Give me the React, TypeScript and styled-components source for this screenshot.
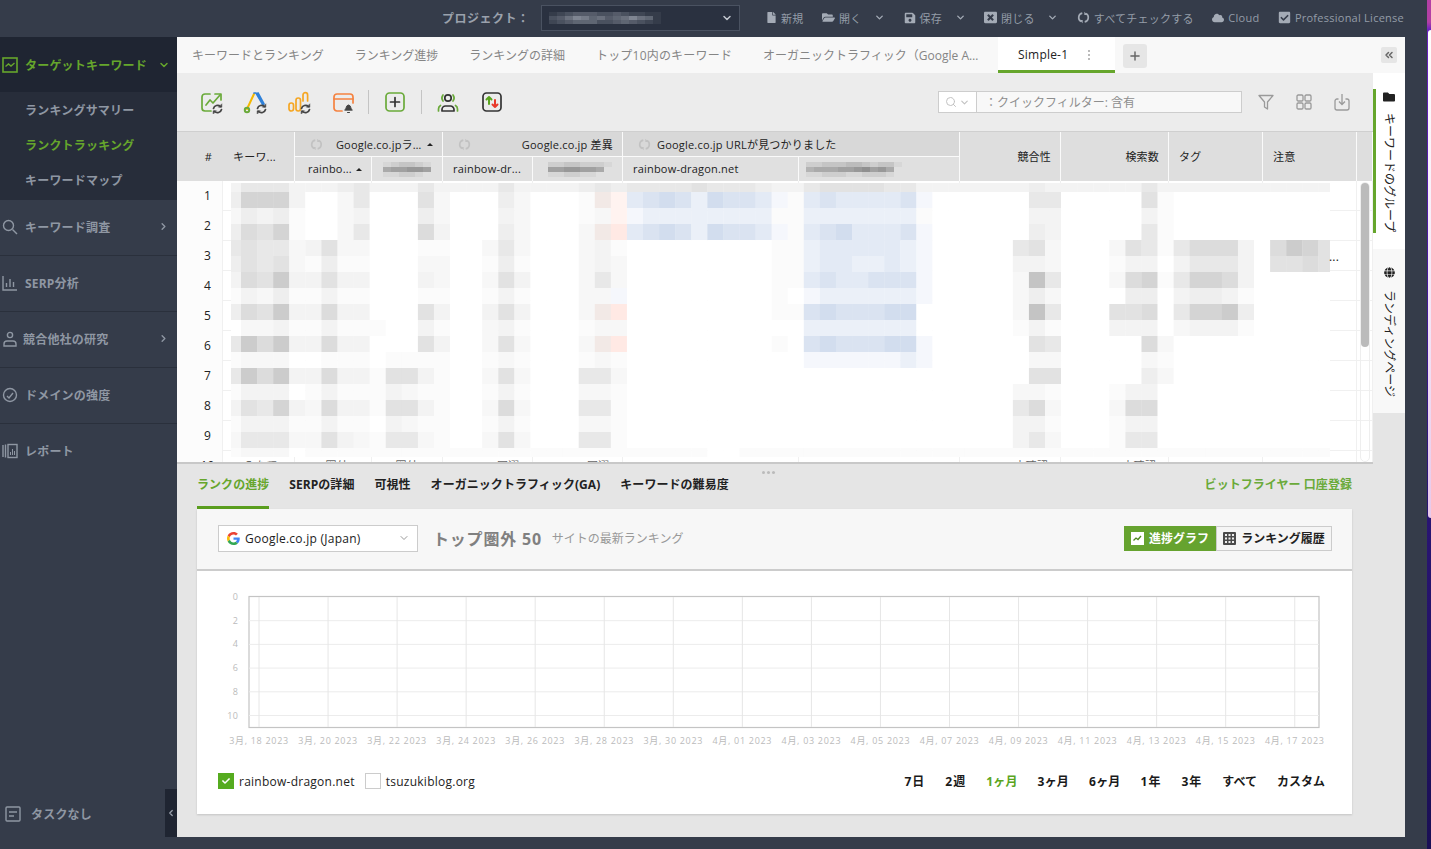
import React from 'react';
import styled, { createGlobalStyle } from 'styled-components';
import { FaFile, FaFolderOpen, FaSave, FaWindowClose, FaCloud, FaCheckSquare, FaFolder, FaGlobe, FaCheck } from 'react-icons/fa';
import { ChevronDown, ChevronRight, ChevronLeft, ChevronsLeft, Plus, Search } from 'lucide-react';

const COLUMNS = '46px 72px 77px 71px 90px 90px 176px 161px 101px 108px 94px 94px 16px';

const Global = createGlobalStyle`
  html, body { margin: 0; padding: 0; background: #353c4a; overflow: hidden; }
  body { font-family: "Open Sans", "Noto Sans CJK JP", sans-serif; font-size: 12px; letter-spacing: .2px; }
  * { box-sizing: border-box; }
`;

const Page = styled.div`
  position: relative; width: 1431px; height: 849px; display: flex; flex-direction: column; background: #353c4a; overflow: hidden;
`;
const TopBar = styled.header`
  height: 37px; flex: none; display: flex; align-items: center; padding: 0 27px 2px 442px; color: #949ca8; font-size: 11px;
`;
const ProjectLabel = styled.span`
  width: 99px; font-size: 12px; font-weight: 700; color: #9aa1ac; letter-spacing: .5px;
`;
const ProjectSelect = styled.div`
  width: 199px; height: 26px; background: #2a3140; border: 1px solid #4a5261; display: flex; align-items: center; justify-content: space-between; padding: 0 6px 0 7px; color: #c2c7cf;
`;
const TopActions = styled.nav`
  margin-left: auto; display: flex; align-items: center; gap: 18.5px;
`;
const TopAction = styled.span`
  display: inline-flex; align-items: center; gap: 4px; white-space: nowrap; color: #949ca8; letter-spacing: .25px;
  svg { flex: none; color: #a4abb6; }
`;
const TopCaret = styled.span`
  display: inline-flex; margin-left: 8.5px; color: ${p => p.$dim ? '#6c7482' : '#a4abb6'};
`;
const Strip = styled.div`
  position: absolute; top: 0; right: 0; width: 4px; height: 849px;
  background: linear-gradient(180deg, #b33fa5 0 22px, #6a22c0 30px, #4a1ba0 250px, #2a1575 500px, #1a0f55 849px);
`;
const StripGlow = styled.div`
  position: absolute; top: 30px; right: 0; width: 3px; height: 488px; border-radius: 3px 0 0 3px;
  background: linear-gradient(180deg, #ffffff, #f3e4f6 60%, #e8c8ea);
`;
const Body = styled.div`
  flex: 1; display: flex; min-height: 0;
`;
const Sidebar = styled.aside`
  position: relative; width: 177px; flex: none; display: flex; flex-direction: column; color: #8f97a3; font-weight: 700;
`;
const NavHead = styled.div`
  height: 55px; display: flex; align-items: center; background: #1f2532; color: #66a62c; padding-left: 2px;
`;
const SubNav = styled.div`
  height: 108px; background: #272d3a; padding-top: 1px;
`;
const SubItem = styled.div`
  height: 35px; line-height: 35px; padding-left: 25px; color: ${p => p.$active ? '#66a62c' : '#8f97a3'};
`;
const NavItem = styled.div`
  height: 56px; display: flex; align-items: center; padding: 0 0 2px 2px; border-bottom: 1px solid ${p => p.$last ? 'transparent' : '#2a303c'};
`;
const NavIcon = styled.svg`
  width: 16px; height: 16px; flex: none; fill: none; stroke: currentColor; stroke-width: 1.4; color: ${p => p.$on ? '#66a62c' : '#8f97a3'};
`;
const NavText = styled.span`
  margin-left: ${p => p.$tight ? '5px' : '7px'}; flex: 1; white-space: nowrap;
`;
const NavChevron = styled.span`
  display: inline-flex; width: 19px; color: ${p => p.$on ? '#66a62c' : '#8f97a3'};
`;
const SideFoot = styled.div`
  margin-top: auto; display: flex; align-items: center; padding: 0 0 26px 5px; gap: 10px;
`;
const Collapse = styled.div`
  position: absolute; right: 0; bottom: 12px; width: 12px; height: 48px; background: #1f2532; color: #9aa1ac; display: flex; align-items: center; justify-content: center;
`;
const Main = styled.main`
  width: 1228px; height: 800px; flex: none; display: flex; flex-direction: column; background: #e5e5e5;
`;
const TabBar = styled.div`
  height: 36px; flex: none; display: flex; background: #f8f8f8; position: relative;
`;
const Tab = styled.div`
  padding: 0 16px 0 15px; height: 36px; line-height: 38px; color: #858585; white-space: nowrap; letter-spacing: ${p => p.$wide ? '.2px' : '0'}; flex: none;
  ${p => p.$fixed ? 'width: 250px; overflow: hidden; text-overflow: ellipsis;' : ''}
`;
const ActiveTab = styled.div`
  width: 117px; height: 36px; background: #fff; border-bottom: 3px solid #66a62c; display: flex; align-items: center; padding: 2px 0 0 20px; color: #222; position: relative; flex: none;
`;
const TabDots = styled.span`
  position: absolute; left: 90px; top: 13px; width: 2px; height: 2px; background: #bbb; box-shadow: 0 4px 0 #bbb, 0 8px 0 #bbb;
`;
const AddTab = styled.div`
  width: 24px; height: 24px; margin: 7px 0 0 8px; background: #e6e6e6; border-radius: 3px; color: #666; display: flex; align-items: center; justify-content: center;
`;
const RailToggle = styled.div`
  position: absolute; left: 1204px; top: 10px; width: 16px; height: 16px; background: #e6e6e6; border-radius: 2px; color: #666; display: flex; align-items: center; justify-content: center;
`;
const Upper = styled.div`
  height: 391px; flex: none; display: flex;
`;
const GridArea = styled.section`
  width: 1196px; flex: none; display: flex; flex-direction: column;
`;
const Toolbar = styled.div`
  height: 59px; flex: none; background: #ececec; border-bottom: 1px solid #cfcfcf; display: flex; align-items: center; padding: 0 22px 0 22px;
`;
const ToolGroup = styled.div`
  display: flex; align-items: center; gap: 20px;
`;
const ToolIcon = styled.svg`
  width: 24px; height: 24px; flex: none; fill: none; stroke-width: 1.7; stroke-linecap: round; stroke-linejoin: round;
`;
const ToolDivider = styled.span`
  width: 1px; height: 24px; background: #c4c4c4; margin: 0 14px 0 ${p => p.$m}px;
`;
const QuickFilter = styled.div`
  margin-left: auto; width: 304px; height: 22px; display: flex; border: 1px solid #cdcdcd; background: #f8f8f8;
`;
const FilterPick = styled.div`
  width: 38px; flex: none; background: #fff; border-right: 1px solid #cdcdcd; display: flex; align-items: center; padding-left: 6px; gap: 2px; color: #c2c2c2;
`;
const FilterText = styled.div`
  padding-left: 8px; line-height: 21px; color: #8e8e8e; letter-spacing: 0;
`;
const RightTools = styled.div`
  display: flex; gap: 20px; margin-left: 15px; color: #9a9a9a;
`;
const HeadGrid = styled.div`
  height: 49px; flex: none; display: grid; background: #dedede;
  grid-template-columns: ${COLUMNS};
  grid-template-rows: 25px 24px; color: #222; font-size: 11px; line-height: 16px;
`;
const HeadCell = styled.div`
  grid-column: ${p => p.$col}; grid-row: ${p => p.$row || '1 / span 2'}; display: flex; align-items: center; min-width: 0; white-space: nowrap;
  justify-content: ${p => p.$align || 'flex-start'}; padding: ${p => p.$pad || '0 10px'};
  background: ${p => p.$bg || '#dedede'}; border-right: 1px solid ${p => p.$plain ? 'transparent' : '#fafafa'};
  ${p => p.$under ? 'border-bottom: 1px solid #fafafa;' : ''}
`;
const HeadClip = styled.span`
  overflow: hidden; text-overflow: ellipsis;
`;
const RankHeadClip = styled(HeadClip)`
  width: 88px; margin-left: 13px;
`;
const UrlHeadText = styled.span`
  margin-left: 6px;
`;
const SortUp = styled.span`
  width: 0; height: 0; flex: none; border: 3px solid transparent; border-bottom: 3px solid #222; border-top: 0; margin-left: 4px;
`;
const RowsArea = styled.div`
  position: relative; height: 283px; flex: none; background: #fff; overflow: hidden; border-bottom: 2px solid #c8c8c8;
`;
const Row = styled.div`
  height: 30px; display: grid; border-bottom: 1px solid #f0f0f0; line-height: 30px;
  grid-template-columns: ${COLUMNS}; color: #666; font-size: 11px;
`;
const RowNum = styled.div`
  text-align: center; background: #fcfcfc; border-right: 1px solid #f0f0f0; color: #222; font-size: 12px; padding-left: 16px;
`;
const RowCell = styled.div`
  border-right: 1px solid #f0f0f0; overflow: hidden; white-space: nowrap; text-align: ${p => p.$a || 'right'}; padding: 0 ${p => p.$r ?? 7}px 0 ${p => p.$l ?? 2}px;
`;
const Mosaic = styled.svg`
  position: absolute; left: 54px; top: 2px;
`;
const More = styled.span`
  position: absolute; left: 1152px; top: 70px; line-height: 12px; color: #222; font-size: 12px;
`;
const ScrollTrack = styled.div`
  position: absolute; left: 1183px; top: 1px; width: 10px; height: 280px; border: 1px solid #eee; border-radius: 5px;
`;
const ScrollThumb = styled.div`
  width: 8px; height: 164px; background: #bbb; border-radius: 4px;
`;
const Rail = styled.aside`
  width: 32px; flex: none; display: flex; flex-direction: column; color: #222;
`;
const RailTab = styled.div`
  height: ${p => p.$h}px; background: ${p => p.$on ? '#fff' : '#f8f8f8'}; display: flex; flex-direction: column; align-items: center; padding-top: 18px; position: relative;
  ${p => p.$on ? `&::before { content: ""; position: absolute; left: 0; top: 16px; width: 3px; height: 144px; background: #66a62c; }` : ''}
`;
const RailLabel = styled.span`
  writing-mode: vertical-rl; text-orientation: sideways; margin-top: ${p => p.$m}px; line-height: 14px; white-space: nowrap; letter-spacing: 0; color: #222;
`;
const Lower = styled.section`
  position: relative; flex: 1; display: flex; flex-direction: column; padding: 0 53px 23px 20px; min-height: 0;
`;
const Grip = styled.span`
  position: absolute; left: 585px; top: 7px; width: 3px; height: 3px; border-radius: 50%; background: #bbb; box-shadow: 5px 0 0 #bbb, 10px 0 0 #bbb;
`;
const LowerTabs = styled.div`
  height: 45px; flex: none; display: flex; gap: 20px; font-weight: 700; color: #222;
`;
const LowerTab = styled.div`
  height: 45px; padding-top: 14px; line-height: 14px; white-space: nowrap; letter-spacing: .05px;
  color: ${p => p.$on ? '#66a62c' : '#222'}; border-bottom: 3px solid ${p => p.$on ? '#5a9e1e' : 'transparent'};
`;
const PromoLink = styled.div`
  margin-left: auto; padding-top: 14px; line-height: 14px; color: #6aaa3a; white-space: nowrap; letter-spacing: .05px;
`;
const Card = styled.div`
  flex: 1; background: #fff; box-shadow: 0 1px 2px rgba(0,0,0,.15); display: flex; flex-direction: column; min-height: 0;
`;
const CardHead = styled.div`
  height: 62px; flex: none; background: #f7f7f7; border-bottom: 2px solid #ccc; display: flex; align-items: center; padding: 0 20px 2px 21px;
`;
const EngineSelect = styled.div`
  width: 200px; height: 27px; border: 1px solid #ccc; background: #fff; display: flex; align-items: center; padding: 0 7px 0 8px; gap: 5px; color: #222; letter-spacing: .25px;
`;
const EngineName = styled.span`
  flex: 1; white-space: nowrap;
`;
const Title = styled.span`
  margin-left: 15px; font-size: 16px; font-weight: 700; color: #808080; letter-spacing: .8px; white-space: nowrap;
`;
const SubTitle = styled.span`
  margin-left: 10px; color: #999; white-space: nowrap; letter-spacing: 0;
`;
const ViewSwitch = styled.div`
  margin-left: auto; display: flex; height: 25px; font-weight: 700;
`;
const ViewButton = styled.div`
  width: ${p => p.$w}px; display: flex; align-items: center; justify-content: center; gap: 5px; white-space: nowrap; letter-spacing: 0;
  background: ${p => p.$on ? '#66a32f' : '#f5f5f5'}; color: ${p => p.$on ? '#fff' : '#222'}; border: 1px solid ${p => p.$on ? '#66a32f' : '#ccc'};
`;
const Chart = styled.svg`
  flex: none; display: block; font-family: "Open Sans", "Noto Sans CJK JP", sans-serif;
`;
const CardFoot = styled.div`
  flex: 1; display: flex; align-items: center; padding: 0 27px 6px 21px; color: #222;
`;
const CheckBox = styled.span`
  width: 16px; height: 16px; flex: none; display: inline-flex; align-items: center; justify-content: center; color: #fff;
  background: ${p => p.$on ? '#55ab1f' : '#fff'}; border: 1px solid ${p => p.$on ? '#55ab1f' : '#ccc'};
`;
const LegendName = styled.span`
  margin: 0 10px 0 5px; white-space: nowrap; letter-spacing: .25px;
`;
const Ranges = styled.div`
  margin-left: auto; display: flex; gap: 20px; font-weight: 700;
`;
const RangeItem = styled.span`
  color: ${p => p.$on ? '#5aa51e' : '#1a1a1a'}; white-space: nowrap; letter-spacing: ${p => p.$ls ?? .2}px;
`;

const Sync = ({ size = 14, color = '#a4abb6' }: { size?: number; color?: string }) => (
  <svg width={size} height={size} viewBox="0 0 16 16" fill="none" stroke={color} strokeWidth="2">
    <path d="M6.5 2.6A5.6 5.6 0 0 0 5 13" />
    <path d="M9.5 13.4A5.6 5.6 0 0 0 11 3" />
    <path d="M3 11h4v4z M13 5H9V1z" fill={color} stroke="none" />
  </svg>
);

const mix = (a: string, b: string, t: number) => {
  const n = (s: string, i: number) => parseInt(s.slice(1 + i * 2, 3 + i * 2), 16);
  const ch = [0, 1, 2].map(i => Math.round(n(a, i) + (n(b, i) - n(a, i)) * t));
  return `rgb(${ch.join(',')})`;
};

const Smudge = ({ rows, w, h, base, ink }: { rows: string[]; w: number; h: number; base: string; ink: string }) => (
  <svg width={rows[0].length * w} height={rows.length * h}>
    {rows.map((r, y) => r.split('').map((c, x) => (
      <rect key={`${x}-${y}`} x={x * w} y={y * h} width={w + .5} height={h + .5} fill={mix(base, ink, Number(c) / 9)} />
    )))}
  </svg>
);

const PALETTE: Record<string, string> = {
  '0': '#ffffff', '1': '#fbfbfb', '2': '#f7f7f7', '3': '#f3f3f3', '4': '#eeeeee', '5': '#e8e8e8', '6': '#e2e2e2', '7': '#dcdcdc', '8': '#d4d4d4', '9': '#cccccc', a: '#c4c4c4',
  p: '#f5f7fc', q: '#ebf0f8', r: '#e3eaf5', s: '#dae3f1', t: '#d2ddee', x: '#fff3f0', y: '#ffe9e4', z: '#f2e9e6',
};
const BANDS = [
  '3555|33345|33353|33353|333454|555565554|33|5666655|333333|343|3333|353|33333|3|3333',
  '4888|30025|00062|00042|0001zx|rstsqtssr|p1|rsrrrrs|p00000|055|0000|061|00000|0|0000',
  '2434|10023|00042|00032|00012x|pqqqqqqqq|11|qqqqqqq|100000|033|0000|031|00000|0|0000',
  '4768|10025|00073|00042|0002zy|rstsqtssr|p1|rstrrrs|p00000|043|0000|051|00000|0|0000',
  '5655|23622|00011|00252|000231|000000000|11|qrrrrrq|p00000|562|0002|651|57773|0|7986',
  '4656|21411|00022|00141|000232|000000000|11|qrrqqrq|p00000|332|0001|330|35553|0|6676',
  '3769|33633|00032|00263|000252|000000000|11|rsrrsss|p00000|2a5|0002|781|58873|0|0000',
  '1324|11311|00011|00131|00022p|000000000|10|pqqqqqq|p00000|242|0000|440|34431|0|0000',
  '4769|33733|00063|00363|0002zy|000000000|11|stssstt|000000|2a5|0006|670|58894|0|0000',
  '0223|11311|10031|00231|000122|000000000|00|qqqqqqq|000000|131|0003|330|23331|0|0000',
  '5979|33733|00063|00262|0002zy|000000000|10|stssstt|p00000|065|0000|072|00000|0|0000',
  '1222|00111|01111|00121|000121|000000000|00|ppppppq|p00000|022|0000|021|00000|0|0000',
  '5979|33733|16631|00262|000552|000000000|00|0000000|000000|066|0000|042|00000|0|0000',
  '1333|01311|13211|00131|000221|000000000|00|0000000|000000|221|0001|330|00000|0|0000',
  '3658|32733|16631|00272|000551|000000000|00|0000000|000000|572|0002|770|00000|0|0000',
  '1333|11311|03211|00131|000221|000000000|00|0000000|000000|331|0001|330|00000|0|0000',
  '2555|22632|15521|00262|000551|000000000|00|0000000|000000|352|0001|550|00000|0|0000',
  '1222|01111|11111|11111|111111|111110011|11|1111111|111111|111|1111|111|11111|1|1111',
].map(s => s.replace(/\|/g, ''));

const CW = 16.08;
const BlurMosaic = () => {
  const rects: React.ReactNode[] = [];
  let y = 0;
  BANDS.forEach((b, bi) => {
    const h = bi === 0 || bi === 17 ? 9 : 16;
    b.split('').forEach((c, i) => {
      const x0 = Math.max(0, 10 + (i - 1) * CW);
      const x1 = Math.min(1099, 10 + i * CW);
      rects.push(<rect key={`${bi}-${i}`} x={x0} y={y} width={x1 - x0 + .3} height={h} fill={PALETTE[c]} />);
    });
    y += h;
  });
  return <Mosaic width="1099" height="274">{rects}</Mosaic>;
};

const GoogleG = () => (
  <svg width="13" height="13" viewBox="0 0 48 48">
    <path fill="#EA4335" d="M24 9.5c3.5 0 6.7 1.2 9.2 3.600l6.900-6.900C35.900 2.400 30.500 0 24 0 14.600 0 6.500 5.400 2.600 13.200l8 6.200C12.500 13.700 17.800 9.500 24 9.500z" />
    <path fill="#4285F4" d="M47 24.500c0-1.600-.1-3.100-.4-4.500H24v9h12.900c-.6 3-2.200 5.500-4.700 7.200l7.700 6c4.500-4.200 7.100-10.300 7.100-17.700z" />
    <path fill="#FBBC05" d="M10.500 28.600c-.5-1.400-.8-3-.8-4.600s.3-3.200.8-4.600l-8-6.200C1 16.400 0 20.100 0 24s1 7.600 2.600 10.800l7.900-6.200z" />
    <path fill="#34A853" d="M24 48c6.500 0 11.900-2.100 15.900-5.800l-7.700-6c-2.200 1.400-4.900 2.300-8.200 2.300-6.200 0-11.500-4.200-13.400-9.900l-8 6.200C6.500 42.600 14.600 48 24 48z" />
  </svg>
);

const BadgeSync = () => (
  <g stroke="#444" strokeWidth="1.7" fill="none">
    <path d="M14.500 18.500a4.200 4.200 0 0 1 7-2" />
    <path d="M22.500 19.500a4.200 4.200 0 0 1-7 2" />
    <path d="M22.800 14.200v3h-3z M14.200 23.800v-3h3z" fill="#444" strokeWidth=".6" />
  </g>
);

const xLabels = ['3月, 18 2023','3月, 20 2023','3月, 22 2023','3月, 24 2023','3月, 26 2023','3月, 28 2023','3月, 30 2023','4月, 01 2023','4月, 03 2023','4月, 05 2023','4月, 07 2023','4月, 09 2023','4月, 11 2023','4月, 13 2023','4月, 15 2023','4月, 17 2023'];
const yLabels = [0, 2, 4, 6, 8, 10];

const RankChart = () => (
  <Chart width="1155" height="183">
    <rect x="52" y="25.500" width="1070" height="131" fill="#fff" stroke="#c4c4c4" strokeWidth="1.200" />
    {yLabels.map((v, i) => {
      const y = 26 + i * 23.7;
      return (
        <g key={v}>
          {i > 0 && <line x1="52" x2="1122" y1={y} y2={y} stroke="#ececec" />}
          <text x="41" y={y + 3} textAnchor="end" fontSize="9" fill="#bbb">{v}</text>
        </g>
      );
    })}
    {xLabels.map((t, i) => {
      const x = 62 + i * 69.05;
      return (
        <g key={t}>
          <line x1={x} x2={x} y1="26" y2="156" stroke="#e6e6e6" />
          <text x={x} y="173" textAnchor="middle" fontSize="9" letterSpacing=".7" fill="#bbb">{t}</text>
        </g>
      );
    })}
  </Chart>
);

const hdr = '#d8d8d8';
const sub = '#e0e0e0';

export default function App() {
  return (
    <Page>
      <Global />
      <Strip><StripGlow /></Strip>
      <TopBar>
        <ProjectLabel>プロジェクト：</ProjectLabel>
        <ProjectSelect>
          <Smudge w={8} h={4} base="#2a3140" ink="#8a909c" rows={['123444334322110', '346875645686510', '234555334543210']} />
          <ChevronDown size={12} strokeWidth={3} />
        </ProjectSelect>
        <TopActions>
          <TopAction><FaFile size={11} />新規</TopAction>
          <TopAction><FaFolderOpen size={13} />開く<TopCaret $dim><ChevronDown size={11} strokeWidth={3} /></TopCaret></TopAction>
          <TopAction><FaSave size={12} />保存<TopCaret><ChevronDown size={11} strokeWidth={3} /></TopCaret></TopAction>
          <TopAction><FaWindowClose size={13} />閉じる<TopCaret><ChevronDown size={11} strokeWidth={3} /></TopCaret></TopAction>
          <TopAction><Sync size={13} />すべてチェックする</TopAction>
          <TopAction><FaCloud size={12} />Cloud</TopAction>
          <TopAction><FaCheckSquare size={13} />Professional License</TopAction>
        </TopActions>
      </TopBar>
      <Body>
        <Sidebar>
          <NavHead>
            <NavIcon viewBox="0 0 16 16" $on><rect x="1" y="1" width="14" height="14" strokeWidth="1.600" /><path d="M3.500 9.500l3-2.500 2.500 2 3.500-3" /></NavIcon>
            <NavText>ターゲットキーワード</NavText>
            <NavChevron $on><ChevronDown size={12} strokeWidth={3} /></NavChevron>
          </NavHead>
          <SubNav>
            <SubItem>ランキングサマリー</SubItem>
            <SubItem $active>ランクトラッキング</SubItem>
            <SubItem>キーワードマップ</SubItem>
          </SubNav>
          <NavItem>
            <NavIcon viewBox="0 0 16 16"><circle cx="6.500" cy="6.500" r="5" /><path d="M10.500 10.500L15 15" /></NavIcon>
            <NavText>キーワード調査</NavText>
            <NavChevron><ChevronRight size={11} strokeWidth={3} /></NavChevron>
          </NavItem>
          <NavItem>
            <NavIcon viewBox="0 0 16 16"><path d="M1 1v14h14M4.500 12V8M8 12V4M11.500 12V7" /></NavIcon>
            <NavText>SERP分析</NavText>
          </NavItem>
          <NavItem>
            <NavIcon viewBox="0 0 16 16" strokeWidth="1.800"><circle cx="8" cy="4" r="2.600" /><path d="M2 15v-2a3 3 0 0 1 3-3h6a3 3 0 0 1 3 3v2z" /></NavIcon>
            <NavText $tight>競合他社の研究</NavText>
            <NavChevron><ChevronRight size={11} strokeWidth={3} /></NavChevron>
          </NavItem>
          <NavItem>
            <NavIcon viewBox="0 0 16 16"><circle cx="8" cy="8" r="6.500" /><path d="M5 9l2 2 4-5" /></NavIcon>
            <NavText>ドメインの強度</NavText>
          </NavItem>
          <NavItem $last>
            <NavIcon viewBox="0 0 16 16"><path d="M1 2v12M3.500 1.500v13" /><rect x="6" y="1.500" width="9" height="13" /><path d="M8.500 12V9M10.500 12V6M12.500 12V8" strokeWidth="1" /></NavIcon>
            <NavText>レポート</NavText>
          </NavItem>
          <SideFoot>
            <NavIcon viewBox="0 0 16 16" strokeWidth="1.500"><rect x="1" y="1" width="14" height="14" rx="1" /><path d="M4 6h8M4 10h5" /></NavIcon>
            タスクなし
          </SideFoot>
          <Collapse><ChevronLeft size={10} strokeWidth={3} /></Collapse>
        </Sidebar>
        <Main>
          <TabBar>
            <Tab>キーワードとランキング</Tab>
            <Tab>ランキング進捗</Tab>
            <Tab>ランキングの詳細</Tab>
            <Tab $wide>トップ10内のキーワード</Tab>
            <Tab $fixed>オーガニックトラフィック（Google Analytics）</Tab>
            <ActiveTab>Simple-1<TabDots /></ActiveTab>
            <AddTab><Plus size={14} strokeWidth={2.5} /></AddTab>
            <RailToggle><ChevronsLeft size={12} strokeWidth={3} /></RailToggle>
          </TabBar>
          <Upper>
            <GridArea>
              <Toolbar>
                <ToolGroup>
                  <ToolIcon viewBox="0 0 24 24" stroke="#6aaa3a">
                    <path d="M11 4H6a3 3 0 0 0-3 3v11a3 3 0 0 0 3 3h6" /><path d="M7 15l4-5 3 3 7-8" /><path d="M16 4h6v6" /><BadgeSync />
                  </ToolIcon>
                  <ToolIcon viewBox="0 0 24 24">
                    <path d="M4 19L11 4" stroke="#f5b800" strokeWidth="2" /><path d="M11 3h2l7 12M15 3l6 11" stroke="#2f80d8" /><circle cx="4" cy="20" r="2.200" stroke="#6aaa3a" strokeWidth="2" /><BadgeSync />
                  </ToolIcon>
                  <ToolIcon viewBox="0 0 24 24" stroke="#f5a623">
                    <rect x="2" y="13" width="4.500" height="8" rx="2.200" /><rect x="9" y="8" width="4.500" height="13" rx="2.200" /><path d="M16 11V5a2.300 2.300 0 0 1 4.600 0v6" /><BadgeSync />
                  </ToolIcon>
                  <ToolIcon viewBox="0 0 24 24" stroke="#f58240">
                    <path d="M11 21H6a3 3 0 0 1-3-3V7a3 3 0 0 1 3-3h13a3 3 0 0 1 3 3v6" /><path d="M3 9h19" />
                    <path d="M14 20c1.500-1 1-5 3.500-5s2 4 3.500 5z M16.500 22.500h2" fill="#444" stroke="#444" strokeWidth="1" />
                  </ToolIcon>
                </ToolGroup>
                <ToolDivider $m={13} />
                <ToolIcon viewBox="0 0 24 24">
                  <rect x="3" y="3" width="18" height="18" rx="3.500" stroke="#6aaa3a" /><path d="M12 7.500v9M7.500 12h9" stroke="#333" />
                </ToolIcon>
                <ToolDivider $m={14} />
                <ToolGroup>
                  <ToolIcon viewBox="0 0 24 24">
                    <circle cx="12" cy="8" r="3.200" stroke="#333" /><path d="M6 21v-1.500a3.500 3.500 0 0 1 3.500-3.500h5a3.500 3.500 0 0 1 3.500 3.500V21z" stroke="#333" />
                    <path d="M7 5a5 5 0 0 0 0 6M17 5a5 5 0 0 1 0 6M2.500 21v-2a4 4 0 0 1 2-3.500M21.500 21v-2a4 4 0 0 0-2-3.500" stroke="#6aaa3a" />
                  </ToolIcon>
                  <ToolIcon viewBox="0 0 24 24">
                    <rect x="3" y="3" width="18" height="18" rx="3.500" stroke="#333" />
                    <path d="M9 14V7M6.500 9.500L9 7l2.500 2.500" stroke="#5aa51e" strokeWidth="2" /><path d="M15 10v7M12.500 14.500L15 17l2.500-2.500" stroke="#e8392b" strokeWidth="2" />
                  </ToolIcon>
                </ToolGroup>
                <QuickFilter>
                  <FilterPick><Search size={12} /><ChevronDown size={11} strokeWidth={2.5} /></FilterPick>
                  <FilterText>：クイックフィルター: 含有</FilterText>
                </QuickFilter>
                <RightTools>
                  <svg width="18" height="18" viewBox="0 0 18 18" fill="none" stroke="currentColor" strokeWidth="1.300"><path d="M2 2.500h14l-5.500 6.500v7l-3-2V9z" strokeLinejoin="round" /></svg>
                  <svg width="18" height="18" viewBox="0 0 18 18" fill="none" stroke="currentColor" strokeWidth="1.300"><rect x="2" y="2" width="6" height="6" rx="1.200" /><rect x="10" y="2" width="6" height="6" rx="1.200" /><rect x="2" y="10" width="6" height="6" rx="1.200" /><rect x="10" y="10" width="6" height="6" rx="1.200" /></svg>
                  <svg width="18" height="18" viewBox="0 0 18 18" fill="none" stroke="currentColor" strokeWidth="1.300"><path d="M5.500 6H4a2 2 0 0 0-2 2v7a2 2 0 0 0 2 2h10a2 2 0 0 0 2-2V8a2 2 0 0 0-2-2h-1.500" /><path d="M9 1v10M6 8.500L9 11.500l3-3" /></svg>
                </RightTools>
              </Toolbar>
              <HeadGrid>
                <HeadCell $col="1" $align="center" $pad="0 0 0 18px" $plain>#</HeadCell>
                <HeadCell $col="2"><HeadClip>キーワ...</HeadClip></HeadCell>
                <HeadCell $col="3 / span 2" $row="1" $bg={hdr} $under $pad="1px 9px 0 15px" $align="space-between">
                  <Sync size={13} color="#c2c2c2" /><RankHeadClip>Google.co.jpランキング</RankHeadClip><SortUp />
                </HeadCell>
                <HeadCell $col="5 / span 2" $row="1" $bg={hdr} $under $pad="1px 9px 0 15px" $align="space-between">
                  <Sync size={13} color="#c2c2c2" /><span>Google.co.jp 差異</span>
                </HeadCell>
                <HeadCell $col="7 / span 2" $row="1" $bg={hdr} $under $pad="1px 0 0 15px">
                  <Sync size={13} color="#c2c2c2" /><UrlHeadText>Google.co.jp URLが見つかりました</UrlHeadText>
                </HeadCell>
                <HeadCell $col="3" $row="2" $bg={sub} $pad="0 9px 0 13px"><HeadClip>rainbo...</HeadClip><SortUp /></HeadCell>
                <HeadCell $col="4" $row="2" $bg={sub} $align="center" $pad="0">
                  <Smudge w={8} h={5} base="#e0e0e0" ink="#8f8f8f" rows={['123321', '677887', '112210']} />
                </HeadCell>
                <HeadCell $col="5" $row="2" $bg={sub}><HeadClip>rainbow-dr...</HeadClip></HeadCell>
                <HeadCell $col="6" $row="2" $bg={sub} $align="center" $pad="0 0 0 4px">
                  <Smudge w={8} h={5} base="#e0e0e0" ink="#8f8f8f" rows={['22332221', '77887760', '11221100']} />
                </HeadCell>
                <HeadCell $col="7" $row="2" $bg={sub}>rainbow-dragon.net</HeadCell>
                <HeadCell $col="8" $row="2" $bg={sub} $pad="0 0 0 7px">
                  <Smudge w={8} h={5} base="#e0e0e0" ink="#8f8f8f" rows={['223334432331', '566677897860', '112221122210']} />
                </HeadCell>
                <HeadCell $col="9" $align="flex-end" $pad="0 9px 0 0">競合性</HeadCell>
                <HeadCell $col="10" $align="flex-end" $pad="0 9px 0 0">検索数</HeadCell>
                <HeadCell $col="11">タグ</HeadCell>
                <HeadCell $col="12">注意</HeadCell>
                <HeadCell $col="13" $pad="0" />
              </HeadGrid>
              <RowsArea>
                {[1, 2, 3, 4, 5, 6, 7, 8, 9, 10].map(n => (
                  <Row key={n}>
                    <RowNum>{n}</RowNum>
                    <RowCell $a="left" $l={10} $r={0}>{n === 10 ? 'つみたて' : ''}</RowCell>
                    <RowCell>{n === 10 ? '圏外 50' : ''}</RowCell>
                    <RowCell $r={8}>{n === 10 ? '圏外 50' : ''}</RowCell>
                    <RowCell $r={3}>{n === 10 ? '同選 ×' : ''}</RowCell>
                    <RowCell $r={3}>{n === 10 ? '同選 ×' : ''}</RowCell>
                    <RowCell />
                    <RowCell />
                    <RowCell $r={12}>{n === 10 ? '未確認' : ''}</RowCell>
                    <RowCell $r={12}>{n === 10 ? '未確認' : ''}</RowCell>
                    <RowCell />
                    <RowCell />
                    <RowCell />
                  </Row>
                ))}
                <BlurMosaic />
                <More>...</More>
                <ScrollTrack><ScrollThumb /></ScrollTrack>
              </RowsArea>
            </GridArea>
            <Rail>
              <RailTab $h={176} $on>
                <FaFolder size={12} />
                <RailLabel $m={10}>キーワードのグループ</RailLabel>
              </RailTab>
              <RailTab $h={164}>
                <FaGlobe size={11} />
                <RailLabel $m={12}>ランディングページ</RailLabel>
              </RailTab>
            </Rail>
          </Upper>
          <Lower>
            <Grip />
            <LowerTabs>
              <LowerTab $on>ランクの進捗</LowerTab>
              <LowerTab>SERPの詳細</LowerTab>
              <LowerTab>可視性</LowerTab>
              <LowerTab>オーガニックトラフィック(GA)</LowerTab>
              <LowerTab>キーワードの難易度</LowerTab>
              <PromoLink>ビットフライヤー 口座登録</PromoLink>
            </LowerTabs>
            <Card>
              <CardHead>
                <EngineSelect>
                  <GoogleG />
                  <EngineName>Google.co.jp (Japan)</EngineName>
                  <ChevronDown size={12} strokeWidth={2} color="#999" />
                </EngineSelect>
                <Title>トップ圏外 50</Title>
                <SubTitle>サイトの最新ランキング</SubTitle>
                <ViewSwitch>
                  <ViewButton $on $w={92}>
                    <svg width="13" height="13" viewBox="0 0 13 13"><rect width="13" height="13" fill="#fff" /><path d="M2.500 8.500l2.500-2.500 2 1.500 3-3.500" fill="none" stroke="#4f8a1f" strokeWidth="1.300" /></svg>
                    進捗グラフ
                  </ViewButton>
                  <ViewButton $w={116}>
                    <svg width="13" height="13" viewBox="0 0 13 13"><rect width="13" height="13" rx="1" fill="#4a4a4a" /><path d="M2 2h2v2H2zM5.500 2h2v2h-2zM9 2h2v2H9zM2 5.500h2v2H2zM5.500 5.500h2v2h-2zM9 5.500h2v2H9zM2 9h2v2H2zM5.500 9h2v2h-2zM9 9h2v2H9z" fill="#eee" /></svg>
                    ランキング履歴
                  </ViewButton>
                </ViewSwitch>
              </CardHead>
              <RankChart />
              <CardFoot>
                <CheckBox $on><FaCheck size={8} /></CheckBox>
                <LegendName>rainbow-dragon.net</LegendName>
                <CheckBox />
                <LegendName>tsuzukiblog.org</LegendName>
                <Ranges>
                  <RangeItem $ls={1}>7日</RangeItem>
                  <RangeItem $ls={1}>2週</RangeItem>
                  <RangeItem $on $ls={.2}>1ヶ月</RangeItem>
                  <RangeItem $ls={.2}>3ヶ月</RangeItem>
                  <RangeItem $ls={.2}>6ヶ月</RangeItem>
                  <RangeItem $ls={1}>1年</RangeItem>
                  <RangeItem $ls={1}>3年</RangeItem>
                  <RangeItem $ls={0}>すべて</RangeItem>
                  <RangeItem $ls={0}>カスタム</RangeItem>
                </Ranges>
              </CardFoot>
            </Card>
          </Lower>
        </Main>
      </Body>
    </Page>
  );
}
